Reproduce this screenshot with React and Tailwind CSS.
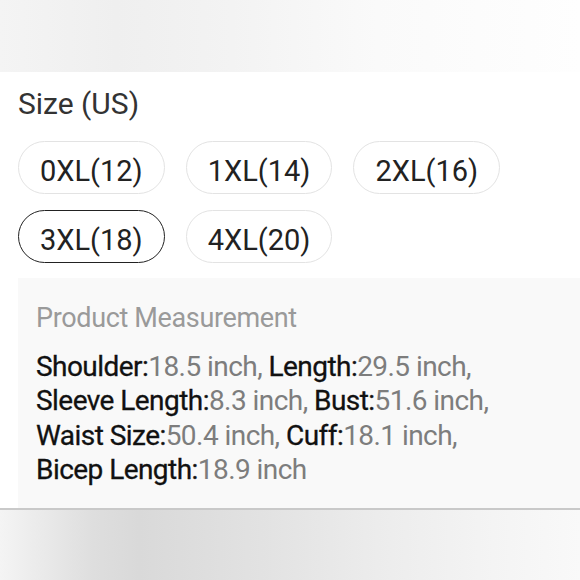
import React from "react";

const sizes = [
  { label: "0XL(12)", selected: false },
  { label: "1XL(14)", selected: false },
  { label: "2XL(16)", selected: false },
  { label: "3XL(18)", selected: true },
  { label: "4XL(20)", selected: false },
];

const lines = [
  [["Shoulder:", "18.5 inch, "], ["Length:", "29.5 inch,"]],
  [["Sleeve Length:", "8.3 inch, "], ["Bust:", "51.6 inch,"]],
  [["Waist Size:", "50.4 inch, "], ["Cuff:", "18.1 inch,"]],
  [["Bicep Length:", "18.9 inch"]],
];

export default function App() {
  return (
    <div
      className="w-[580px] h-[580px] flex flex-col bg-white overflow-hidden"
      style={{ fontFamily: "Roboto, 'Noto Sans', sans-serif" }}
    >
      <div className="h-[72px] shrink-0 bg-[linear-gradient(90deg,#f4f4f4_0%,#efefef_20%,#f3f3f3_40%,#fafafa_65%,#fefefe_100%)]" />
      <div className="pl-[18px] pt-[14px] bg-white">
        <div className="text-[30px] leading-[36px] text-[#333333]">Size (US)</div>
        <div className="mt-[19px] flex flex-wrap gap-x-[21px] gap-y-[16px]">
          {sizes.map((s) => (
            <div
              key={s.label}
              className={
                s.selected
                  ? "h-[53px] px-[21px] pt-[7px] flex items-center justify-center rounded-full border-[1.5px] border-[#222222] text-[29px] leading-[35px] text-[#222222]"
                  : "h-[53px] px-[21px] pt-[7px] flex items-center justify-center rounded-full border-[1.5px] border-[#e3e3e3] text-[29px] leading-[35px] text-[#222222]"
              }
            >
              {s.label}
            </div>
          ))}
        </div>
        <div className="mt-[15px] bg-[#f9f9f9] pl-[18px] pt-[23px] pb-[21px]">
          <div className="text-[27px] leading-[35px] tracking-[-0.35px] text-[#9a9a9a]">Product Measurement</div>
          <div className="mt-[14px] text-[28px] leading-[34.3px] tracking-[-0.55px]">
            {lines.map((line, i) => (
              <div key={i} className="whitespace-pre">
                {line.map(([k, v]) => (
                  <React.Fragment key={k}>
                    <span className="text-[#111111] [-webkit-text-stroke:0.3px_#111111]">{k}</span>
                    <span className="text-[#7d7d7d]">{v}</span>
                  </React.Fragment>
                ))}
              </div>
            ))}
          </div>
        </div>
      </div>
      <div className="h-[2px] shrink-0 bg-[#c9c9c9]" />
      <div className="flex-1 bg-[linear-gradient(90deg,#f4f4f4_0%,#dedede_16%,#d9d9d9_24%,#e2e2e2_45%,#ececec_65%,#f4f4f4_85%,#f9f9f9_100%)]" />
    </div>
  );
}
